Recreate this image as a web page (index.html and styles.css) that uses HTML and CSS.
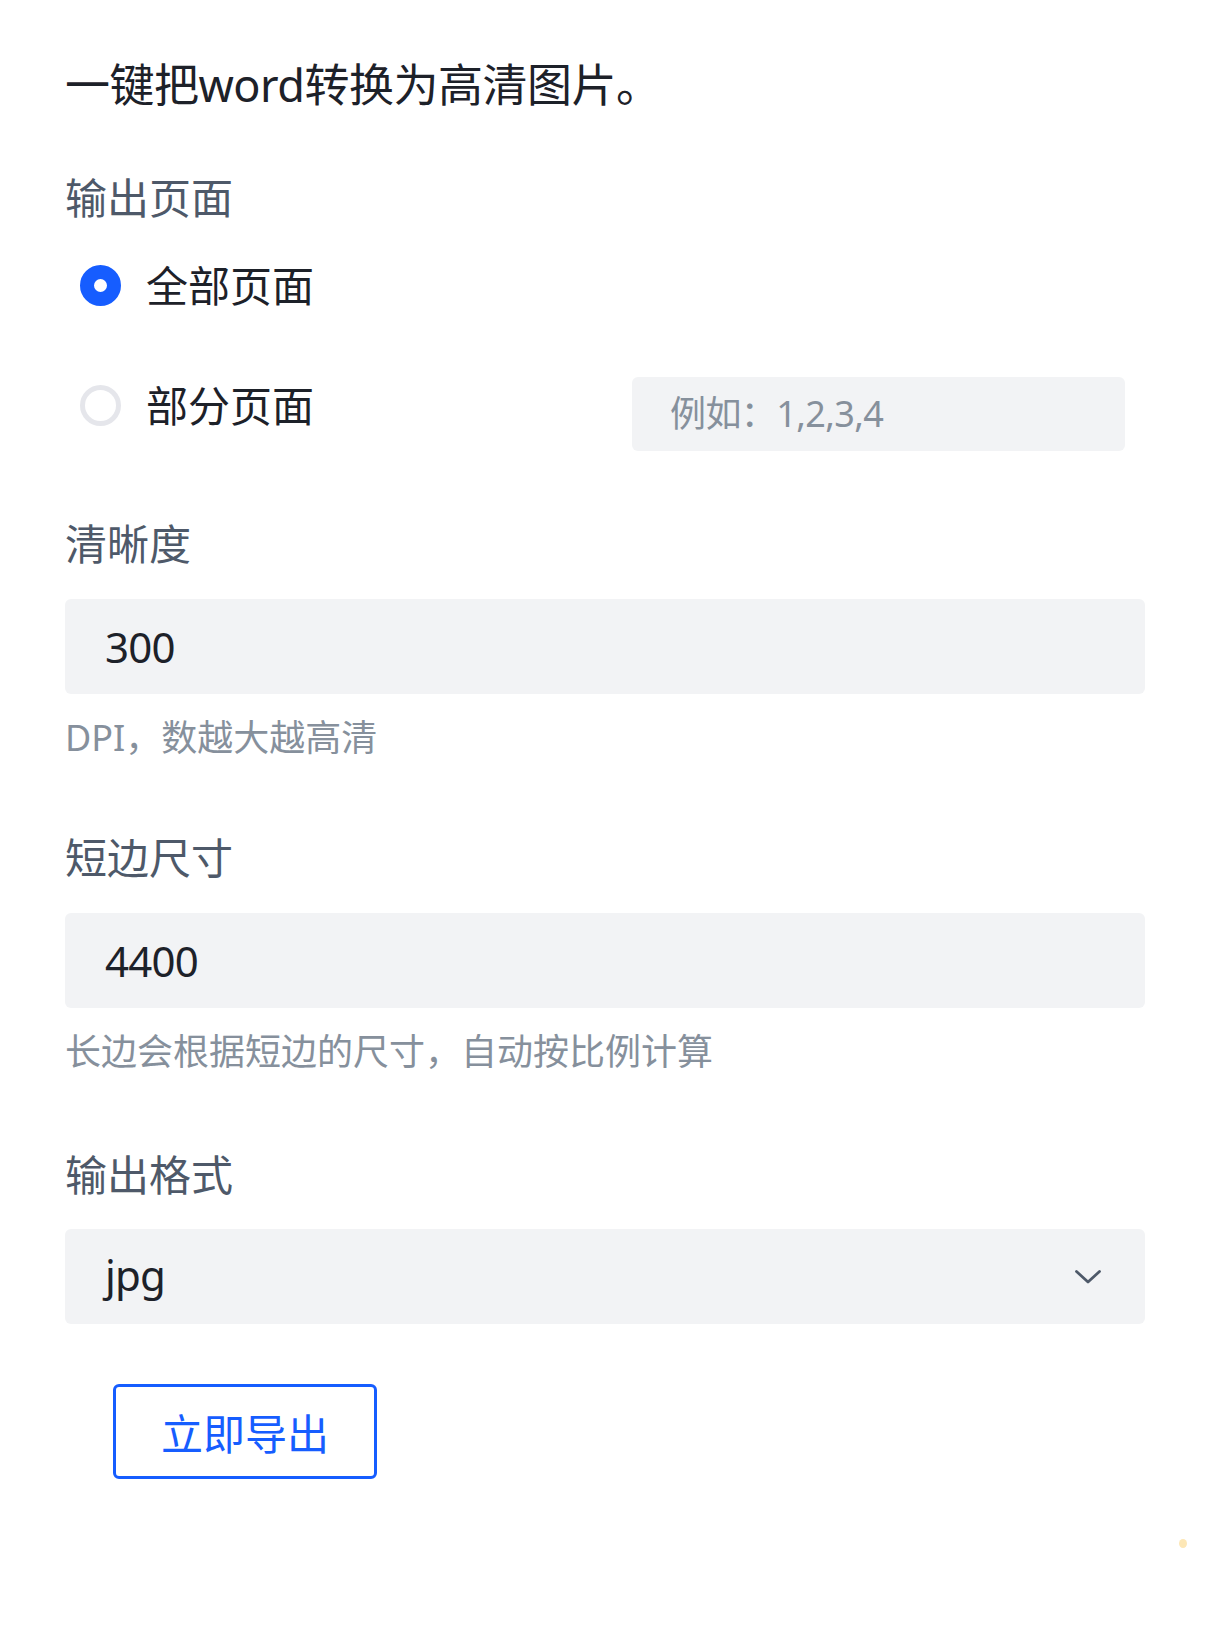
FILE: index.html
```html
<!DOCTYPE html>
<html lang="zh-CN">
<head>
<meta charset="utf-8">
<title>word转图片</title>
<link rel="stylesheet" href="styles.css">
</head>
<body>
<div class="page">
  <h1 class="title">一键把word转换为高清图片。</h1>

  <div class="label label-first">输出页面</div>
  <div class="radio-group">
    <div class="radio-row">
      <span class="radio radio-checked"></span>
      <span class="radio-text">全部页面</span>
    </div>
    <div class="radio-row radio-row-second">
      <span class="radio"></span>
      <span class="radio-text">部分页面</span>
      <div class="page-input">例如：1,2,3,4</div>
    </div>
  </div>

  <div class="label">清晰度</div>
  <div class="field">300</div>
  <div class="hint">DPI，数越大越高清</div>

  <div class="label">短边尺寸</div>
  <div class="field">4400</div>
  <div class="hint">长边会根据短边的尺寸，自动按比例计算</div>

  <div class="label label-format">输出格式</div>
  <div class="field select">
    <span>jpg</span>
    <svg class="chevron" width="26" height="14" viewBox="0 0 26 14" aria-hidden="true">
      <path d="M1.5 1.5 L13 12 L24.5 1.5" fill="none" stroke="#4e5969" stroke-width="2.8" stroke-linecap="round" stroke-linejoin="round"/>
    </svg>
  </div>

  <button class="export-btn">立即导出</button>

  <span class="corner-dot"></span>
</div>
</body>
</html>
```

FILE: styles.css
```css
html, body {
  margin: 0;
  padding: 0;
  background: #ffffff;
}

body {
  font-family: "Noto Sans", "Noto Sans CJK SC", sans-serif;
  color: #1d2129;
}

.page {
  position: relative;
  width: 1080px;
  padding: 51px 0 150px 65px;
  min-height: 1430px;
}

.title {
  margin: 0;
  font-size: 45px;
  font-weight: 400;
  line-height: 68px;
  color: #1d2129;
  letter-spacing: -0.5px;
}

.label {
  font-size: 42px;
  line-height: 63px;
  color: #4e5969;
  margin-top: 61px;
}

.label-first {
  margin-top: 47px;
}

.label-format {
  margin-top: 64px;
}

.radio-group {
  display: flex;
  flex-direction: column;
  gap: 62px;
  margin-top: 28px;
  padding-left: 15px;
}

.radio-row {
  display: flex;
  align-items: flex-start;
  height: 58px;
}

.radio-row-second {
  height: 74px;
}

.radio {
  box-sizing: border-box;
  flex: none;
  width: 41px;
  height: 41px;
  margin-top: 8px;
  border-radius: 50%;
  border: 5px solid #e5e6eb;
  background: #ffffff;
}

.radio-checked {
  border: 14px solid #165dff;
}

.radio-text {
  margin-left: 25px;
  font-size: 42px;
  line-height: 58px;
  color: #1d2129;
}

.page-input {
  box-sizing: border-box;
  width: 493px;
  height: 74px;
  margin-left: auto;
  margin-right: 20px;
  padding-left: 38px;
  border-radius: 6px;
  background: #f2f3f5;
  font-size: 36px;
  line-height: 74px;
  color: #86909c;
  letter-spacing: -0.6px;
}

.field {
  box-sizing: border-box;
  height: 95px;
  margin-top: 24px;
  padding-left: 40px;
  border-radius: 6px;
  background: #f2f3f5;
  font-size: 42px;
  line-height: 95px;
  color: #1d2129;
  letter-spacing: -0.8px;
}

.select {
  display: flex;
  align-items: center;
  justify-content: space-between;
  padding-right: 44px;
  margin-top: 23px;
  line-height: 1;
}

.select span {
  padding-bottom: 4px;
}

.chevron {
  display: block;
}

.hint {
  margin-top: 17px;
  font-size: 36px;
  line-height: 54px;
  color: #86909c;
}

.export-btn {
  display: block;
  box-sizing: border-box;
  width: 264px;
  height: 95px;
  margin: 60px 0 0 48px;
  padding: 0;
  border: 3px solid #165dff;
  border-radius: 6px;
  background: #ffffff;
  font-family: "Noto Sans", "Noto Sans CJK SC", sans-serif;
  font-size: 42px;
  color: #165dff;
  cursor: pointer;
}

.corner-dot {
  position: absolute;
  left: 1179px;
  top: 1539px;
  width: 8px;
  height: 9px;
  border-radius: 50%;
  background: #fde7b6;
}
```
